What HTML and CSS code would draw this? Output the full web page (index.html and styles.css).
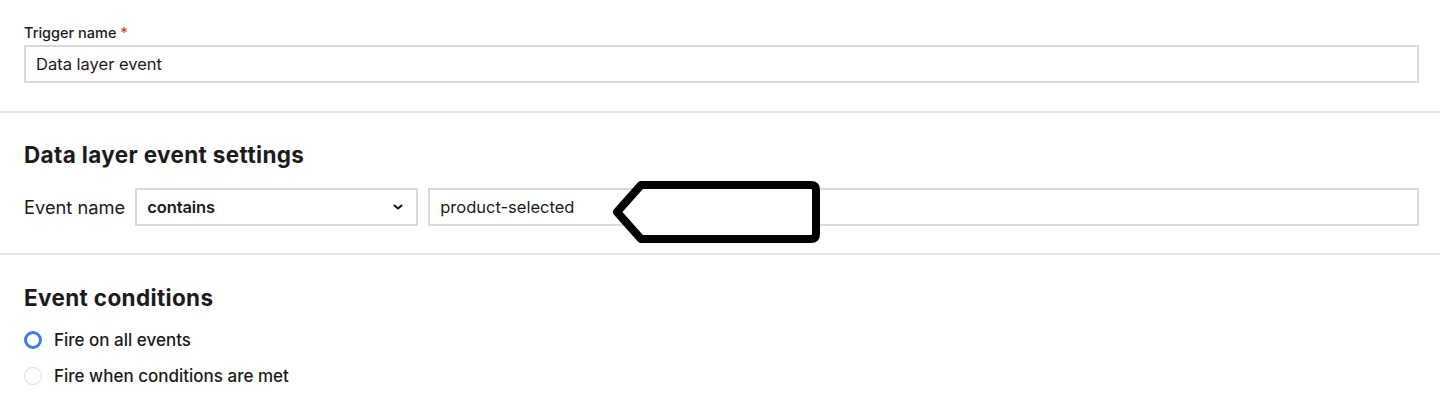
FILE: index.html
```html
<!DOCTYPE html>
<html>
<head>
<meta charset="utf-8">
<link rel="stylesheet" href="styles.css">
</head>
<body>
<div class="page">
  <section class="sec sec-name">
    <label class="field-label">Trigger name <span class="req">*</span></label>
    <div class="input">Data layer event</div>
  </section>
  <section class="sec sec-settings">
    <h2 class="heading">Data layer event settings</h2>
    <div class="row">
      <span class="row-label">Event name</span>
      <div class="select">
        <span>contains</span>
        <svg class="chev" width="12" height="8" viewBox="0 0 12 8"><path d="M2.5 2.5 L6 5.5 L9.5 2.5" fill="none" stroke="#111" stroke-width="2" stroke-linecap="round" stroke-linejoin="round"/></svg>
      </div>
      <div class="input input-flex">product-selected</div>
      <svg class="callout" width="218" height="74" viewBox="0 0 218 74"><path d="M33 9 L203 9 Q208 9 208 14 L208 58 Q208 63 203 63 L33 63 L9 36 Z" fill="#fff" stroke="#000" stroke-width="8" stroke-linejoin="round"/></svg>
    </div>
  </section>
  <section class="sec sec-cond">
    <h2 class="heading">Event conditions</h2>
    <div class="radios">
      <div class="radio-row"><span class="radio radio-on"></span><span class="radio-text">Fire on all events</span></div>
      <div class="radio-row"><span class="radio"></span><span class="radio-text">Fire when conditions are met</span></div>
    </div>
  </section>
</div>
</body>
</html>
```
FILE: styles.css
```css
* { box-sizing: border-box; }
html, body { margin: 0; padding: 0; background: #fff; }
body { font-family: Inter, "Noto Sans", "Liberation Sans", sans-serif; color: #1b1b1b; }
.page { width: 1440px; height: 413px; overflow: hidden; }
.sec { padding-left: 24px; padding-right: 21px; border-bottom: 2px solid #e4e4e4; }
.sec-cond { border-bottom: none; }
.sec-name { padding-top: 25px; padding-bottom: 28px; }
.field-label { display: block; font-size: 14.5px; line-height: 16px; font-weight: 500; margin-bottom: 4px; }
.req { color: #d93a2b; }
.input { height: 38px; border: 2px solid #d9d9d9; display: flex; align-items: center; padding-left: 10px; font-size: 16.5px; }
.sec-settings { padding-top: 30px; padding-bottom: 27px; }
.heading { margin: 0; font-size: 22.5px; line-height: 24px; font-weight: 700; letter-spacing: 0.35px; }
.row { position: relative; display: flex; align-items: center; gap: 10px; margin-top: 21px; }
.row-label { font-size: 18.3px; }
.select { width: 283px; height: 38px; border: 2px solid #d9d9d9; display: flex; align-items: center; justify-content: space-between; padding: 0 12px 0 10px; font-size: 16.5px; font-weight: 600; letter-spacing: -0.1px; }
.chev { display: block; }
.input-flex { flex: 1; }
.callout { position: absolute; left: 584px; top: -12px; }
.sec-cond { padding-top: 31px; }
.radios { margin-top: 18px; display: flex; flex-direction: column; gap: 12px; }
.radio-row { display: flex; align-items: center; height: 24px; gap: 12px; }
.radio { width: 18px; height: 18px; border-radius: 50%; border: 1.5px solid #dcdcdc; }
.radio-on { border: 3.5px solid #3a7ee4; }
.radio-text { font-size: 17px; font-weight: 500; }
```
